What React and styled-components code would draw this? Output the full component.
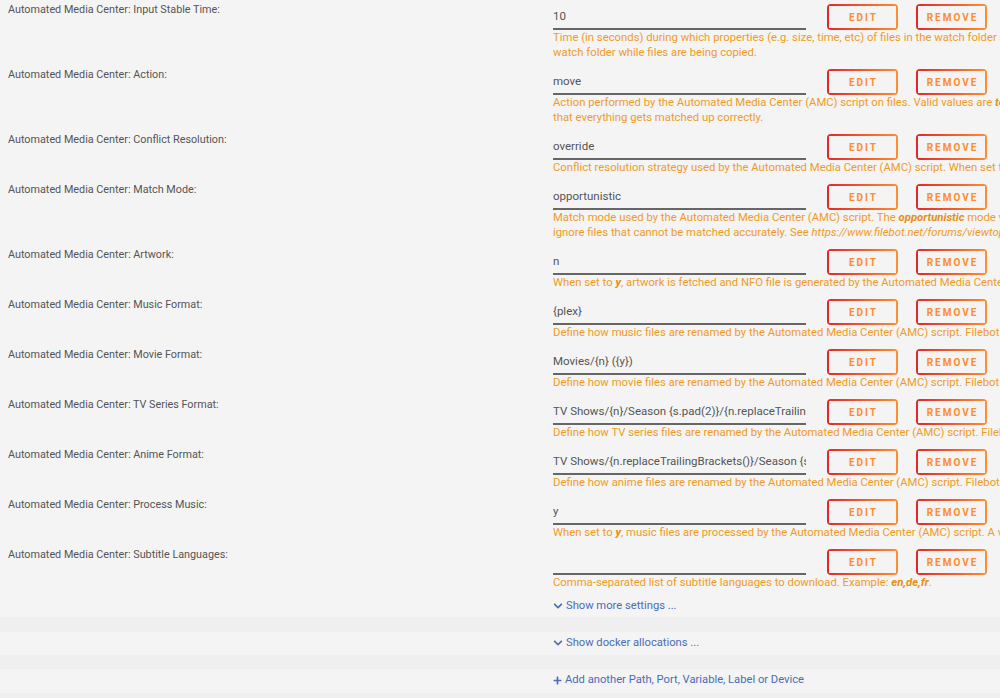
import React from 'react';
import styled, { createGlobalStyle } from 'styled-components';
import { FaChevronDown, FaPlus } from 'react-icons/fa';

const FONT = `Roboto, "Liberation Sans", Arial, sans-serif`;

const Global = createGlobalStyle`
  html, body { margin: 0; padding: 0; background: #f4f4f4; overflow: hidden; }
  body { font-family: ${FONT}; }
  #root { width: 1000px; height: 698px; overflow: hidden; }
`;

const Page = styled.div`
  width: 1400px;
  background: #f4f4f4;
  display: flex;
  flex-direction: column;
`;

const Row = styled.div`
  display: grid;
  grid-template-columns: 545px 1fr;
  padding: 4px 0 5px 8px;
`;

const Label = styled.div`
  font-size: 10.8px;
  line-height: 14px;
  margin-top: -1px;
  color: #555;
  white-space: nowrap;
`;

const Value = styled.div`
  display: flex;
  flex-direction: column;
`;

const Controls = styled.div`
  display: flex;
  align-items: flex-start;
  height: 26px;
`;

const Field = styled.input`
  box-sizing: border-box;
  width: 253px;
  height: 26px;
  margin: 0;
  padding: 0;
  border: 0;
  border-bottom: 2px solid #666;
  background: transparent;
  font-family: ${FONT};
  font-size: 11.5px;
  color: #555;
  outline: none;
`;

const Button = styled.button`
  box-sizing: border-box;
  width: 71px;
  height: 26px;
  margin: 0 0 0 ${(p) => p.$gap}px;
  padding: 0;
  border: 0;
  border-radius: 4px;
  font-family: ${FONT};
  font-size: 10px;
  font-weight: bold;
  letter-spacing: 2px;
  text-indent: 2px;
  text-transform: uppercase;
  color: #ff8c2f;
  cursor: pointer;
  background:
    linear-gradient(to right, #e22828, #ff8c2f) 0 0 / 100% 2px no-repeat,
    linear-gradient(to right, #e22828, #ff8c2f) 0 100% / 100% 2px no-repeat,
    linear-gradient(#e22828, #e22828) 0 0 / 2px 100% no-repeat,
    linear-gradient(#ff8c2f, #ff8c2f) 100% 0 / 2px 100% no-repeat;
`;

const Desc = styled.div`
  font-size: 11.3px;
  line-height: 15px;
  color: #f29b24;
  white-space: nowrap;
`;

const Em = styled.em`
  font-weight: bold;
  font-style: italic;
  color: #e88e12;
`;

const Url = styled.i`
  font-style: italic;
`;

const LinkLine = styled.div`
  box-sizing: border-box;
  height: ${(p) => p.$h}px;
  padding: ${(p) => p.$top}px 0 0 553px;
  font-size: 11.2px;
  line-height: 14px;
  color: #486dba;
  display: flex;
  align-items: flex-start;
`;

const Link = styled.a`
  display: inline-flex;
  align-items: center;
  gap: 3px;
  color: #486dba;
  text-decoration: none;
  white-space: nowrap;
  svg { flex: none; }
`;

const Band = styled.div`
  height: ${(p) => p.$h}px;
  background: #efefef;
`;

const settings = [
  {
    label: 'Input Stable Time',
    value: '10',
    desc: [
      <>Time (in seconds) during which properties (e.g. size, time, etc) of files in the watch folder need to remain the same before invoking the Automated Media Center (AMC) script. This is to avoid processing the</>,
      <>watch folder while files are being copied.</>,
    ],
  },
  {
    label: 'Action',
    value: 'move',
    desc: [
      <>Action performed by the Automated Media Center (AMC) script on files. Valid values are <Em>test</Em>, <Em>copy</Em>, <Em>move</Em>, <Em>symlink</Em>, <Em>hardlink</Em>, <Em>keeplink</Em>, <Em>duplicate</Em> or <Em>clone</Em>. Use the <Em>test</Em> operation to perform a dry-run and verify</>,
      <>that everything gets matched up correctly.</>,
    ],
  },
  {
    label: 'Conflict Resolution',
    value: 'override',
    desc: [
      <>Conflict resolution strategy used by the Automated Media Center (AMC) script. When set to <Em>skip</Em>, existing files won't be overwritten. When set to <Em>override</Em>, existing files are overwritten.</>,
    ],
  },
  {
    label: 'Match Mode',
    value: 'opportunistic',
    desc: [
      <>Match mode used by the Automated Media Center (AMC) script. The <Em>opportunistic</Em> mode works for all files regardless how badly they are named, while the <Em>strict</Em> mode is for reasonably well-named files and</>,
      <>ignore files that cannot be matched accurately. See <Url>https://www.filebot.net/forums/viewtopic.php?t=4695</Url> for complete documentation.</>,
    ],
  },
  {
    label: 'Artwork',
    value: 'n',
    desc: [
      <>When set to <Em>y</Em>, artwork is fetched and NFO file is generated by the Automated Media Center (AMC) script.</>,
    ],
  },
  {
    label: 'Music Format',
    value: '{plex}',
    desc: [
      <>Define how music files are renamed by the Automated Media Center (AMC) script. Filebot supports very powerful naming schemes by using Groovy format expressions.</>,
    ],
  },
  {
    label: 'Movie Format',
    value: 'Movies/{n} ({y})',
    desc: [
      <>Define how movie files are renamed by the Automated Media Center (AMC) script. Filebot supports very powerful naming schemes by using Groovy format expressions.</>,
    ],
  },
  {
    label: 'TV Series Format',
    value: 'TV Shows/{n}/Season {s.pad(2)}/{n.replaceTrailingBrackets()} - {s00e00} - {t}',
    desc: [
      <>Define how TV series files are renamed by the Automated Media Center (AMC) script. Filebot supports very powerful naming schemes by using Groovy format expressions.</>,
    ],
  },
  {
    label: 'Anime Format',
    value: 'TV Shows/{n.replaceTrailingBrackets()}/Season {s.pad(2)}/{n} - {s00e00} - {t}',
    desc: [
      <>Define how anime files are renamed by the Automated Media Center (AMC) script. Filebot supports very powerful naming schemes by using Groovy format expressions.</>,
    ],
  },
  {
    label: 'Process Music',
    value: 'y',
    desc: [
      <>When set to <Em>y</Em>, music files are processed by the Automated Media Center (AMC) script. A value of <Em>n</Em> does not process them.</>,
    ],
  },
  {
    label: 'Subtitle Languages',
    value: '',
    desc: [
      <>Comma-separated list of subtitle languages to download. Example: <Em>en,de,fr</Em>.</>,
    ],
  },
];

function SettingRow({ label, value, desc }) {
  return (
    <Row>
      <Label>Automated Media Center: {label}:</Label>
      <Value>
        <Controls>
          <Field type="text" value={value} readOnly />
          <Button type="button" $gap={21}>Edit</Button>
          <Button type="button" $gap={18}>Remove</Button>
        </Controls>
        <Desc>
          {desc.map((line, i) => (
            <div key={i}>{line}</div>
          ))}
        </Desc>
      </Value>
    </Row>
  );
}

export default function App() {
  return (
    <>
      <Global />
      <Page>
        {settings.map((s) => (
          <SettingRow key={s.label} {...s} />
        ))}
        <LinkLine $h={22} $top={4}>
          <Link href="#"><FaChevronDown size={10} /> Show more settings ...</Link>
        </LinkLine>
        <Band $h={15} />
        <LinkLine $h={23} $top={4}>
          <Link href="#"><FaChevronDown size={10} /> Show docker allocations ...</Link>
        </LinkLine>
        <Band $h={14} />
        <LinkLine $h={24} $top={4}>
          <Link href="#"><FaPlus size={9} /> Add another Path, Port, Variable, Label or Device</Link>
        </LinkLine>
        <Band $h={10} />
      </Page>
    </>
  );
}
